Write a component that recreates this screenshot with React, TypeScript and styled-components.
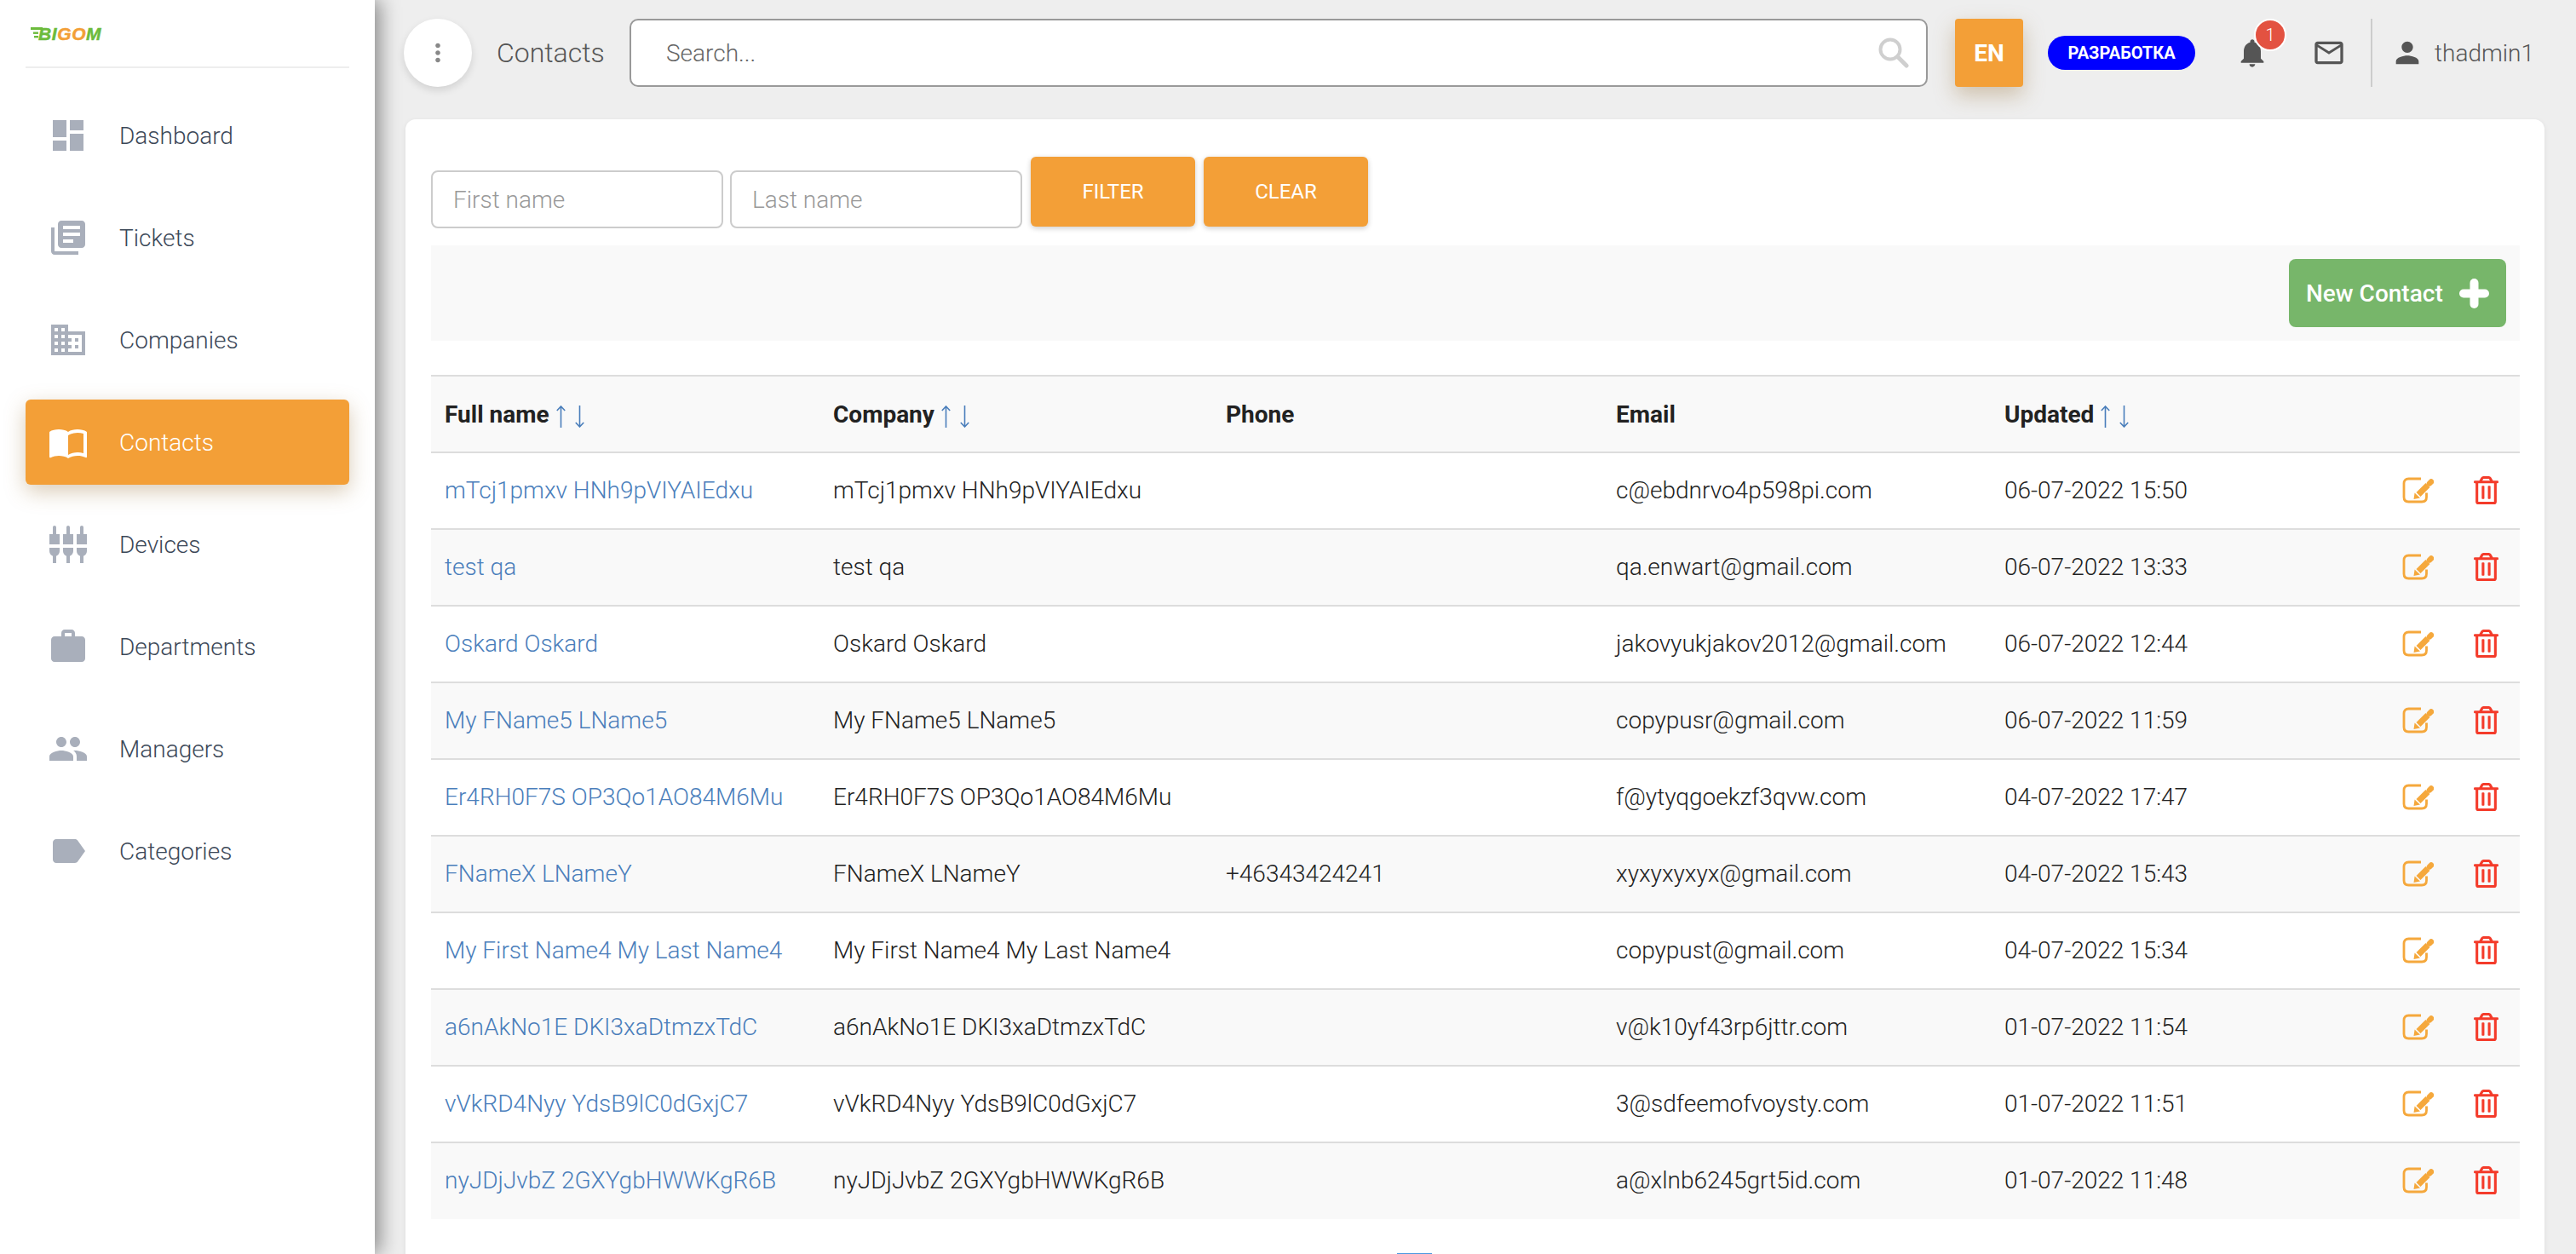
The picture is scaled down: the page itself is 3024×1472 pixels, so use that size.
import React from 'react';
import styled, { createGlobalStyle } from 'styled-components';
import {
  MdDashboard,
  MdLibraryBooks,
  MdDomain,
  MdImportContacts,
  MdSettingsInputComponent,
  MdWork,
  MdPeople,
  MdLabel,
  MdMoreVert,
  MdNotifications,
  MdMailOutline,
  MdPerson,
} from 'react-icons/md';
import { FaRegTrashAlt } from 'react-icons/fa';

const GlobalStyle = createGlobalStyle`
  html, body {
    margin: 0;
    padding: 0;
    height: 100%;
    overflow: hidden;
    background: #eeeeee;
    font-family: Roboto, 'Liberation Sans', sans-serif;
  }
  * { box-sizing: border-box; }
`;

const Layout = styled.div`
  display: flex;
  width: 3024px;
  height: 1472px;
  overflow: hidden;
`;

const Sidebar = styled.aside`
  flex: 0 0 440px;
  height: 100%;
  padding: 0 30px;
  background: #fff;
  box-shadow: 6px 0 22px rgba(0, 0, 0, 0.42);
  position: relative;
  z-index: 2;
`;

const LogoRow = styled.div`
  display: flex;
  align-items: center;
  height: 80px;
  padding: 0 6px;
  border-bottom: 2px solid #eeeeee;
`;

const LogoText = styled.span`
  margin-left: -5px;
  font-family: 'Liberation Sans', sans-serif;
  font-style: italic;
  font-weight: 700;
  font-size: 21px;
  line-height: 1;
  letter-spacing: 0.6px;
  color: #6cbb3c;
  -webkit-text-stroke: 0.5px currentColor;
  b {
    color: #f39f37;
    font-weight: 700;
  }
`;

const Nav = styled.nav`
  display: flex;
  flex-direction: column;
  gap: 20px;
  padding-top: 29px;
`;

const NavItem = styled.a<{ $active?: boolean }>`
  display: flex;
  align-items: center;
  height: 100px;
  padding-left: 26px;
  gap: 36px;
  border-radius: 6px;
  font-size: 28px;
  font-weight: 300;
  color: ${p => (p.$active ? '#fff' : '#3c4858')};
  background: ${p => (p.$active ? '#f39f37' : 'transparent')};
  box-shadow: ${p => (p.$active ? '0 8px 24px rgba(150, 110, 50, 0.35)' : 'none')};
  svg {
    width: 48px;
    height: 48px;
    flex: none;
    color: ${p => (p.$active ? '#fff' : '#a9afbb')};
  }
`;

const Main = styled.main`
  flex: 1;
  min-width: 0;
  padding: 22px 37px 0 36px;
`;

const Topbar = styled.header`
  display: flex;
  align-items: center;
  height: 80px;
  margin-left: -2px;
`;

const RoundButton = styled.button`
  flex: none;
  width: 80px;
  height: 80px;
  padding: 0;
  border: 0;
  border-radius: 50%;
  display: flex;
  align-items: center;
  justify-content: center;
  background: #fff;
  color: #888;
  box-shadow: 0 4px 10px rgba(0, 0, 0, 0.12);
  svg {
    width: 34px;
    height: 34px;
  }
`;

const PageTitle = styled.h1`
  flex: none;
  width: 156px;
  margin: 0 0 0 29px;
  font-size: 32px;
  font-weight: 300;
  color: #555;
`;

const SearchBox = styled.div`
  flex: none;
  display: flex;
  align-items: center;
  justify-content: space-between;
  width: 1524px;
  height: 80px;
  padding: 0 20px 0 41px;
  background: #fff;
  border: 2px solid #999;
  border-radius: 10px;
  font-size: 28px;
  font-weight: 300;
  color: #666;
`;

const LangButton = styled.button`
  flex: none;
  width: 80px;
  height: 80px;
  margin-left: 32px;
  border: 0;
  border-radius: 4px;
  background: #f39f37;
  color: #fff;
  font-family: Roboto, sans-serif;
  font-size: 28px;
  font-weight: 700;
  box-shadow: 0 10px 24px rgba(150, 110, 50, 0.35);
`;

const EnvPill = styled.span`
  flex: none;
  display: flex;
  align-items: center;
  justify-content: center;
  width: 173px;
  height: 40px;
  margin-left: 29px;
  border-radius: 20px;
  background: #0000ff;
  color: #fff;
  font-size: 20px;
  font-weight: 700;
`;

const IconSlot = styled.span`
  flex: none;
  position: relative;
  display: flex;
  align-items: center;
  justify-content: center;
  width: 40px;
  height: 40px;
  color: #555;
  svg {
    width: 40px;
    height: 40px;
  }
`;

const BellSlot = styled(IconSlot)`
  margin-left: 47px;
`;

const MailSlot = styled(IconSlot)`
  margin-left: 50px;
`;

const CountBadge = styled.span`
  position: absolute;
  top: -20px;
  left: 22px;
  width: 38px;
  height: 38px;
  display: flex;
  align-items: center;
  justify-content: center;
  border: 2px solid #fff;
  border-radius: 50%;
  background: #e35241;
  color: #fff;
  font-size: 20px;
  font-weight: 300;
`;

const UserBlock = styled.div`
  flex: none;
  display: flex;
  align-items: center;
  gap: 12px;
  height: 80px;
  margin-left: 29px;
  padding-left: 21px;
  border-left: 2px solid #ccc;
  font-size: 28px;
  font-weight: 300;
  color: #555;
`;

const Card = styled.section`
  margin-top: 38px;
  height: 1400px;
  padding: 44px 29px 0 30px;
  background: #fff;
  border-radius: 12px;
  box-shadow: 0 2px 6px rgba(0, 0, 0, 0.08);
`;

const FilterRow = styled.div`
  display: flex;
  align-items: flex-start;
  gap: 8px;
  height: 104px;
`;

const FilterInput = styled.div`
  flex: none;
  width: 343px;
  height: 68px;
  margin-top: 16px;
  padding-left: 24px;
  display: flex;
  align-items: center;
  border: 2px solid #ccc;
  border-radius: 8px;
  font-size: 28px;
  font-weight: 300;
  color: #999;
`;

const FilterButton = styled.button`
  flex: none;
  width: 193px;
  height: 82px;
  margin-left: 2px;
  border: 0;
  border-radius: 6px;
  background: #f39f37;
  color: #fff;
  font-family: Roboto, sans-serif;
  font-size: 24px;
  font-weight: 400;
  box-shadow: 0 2px 6px rgba(0, 0, 0, 0.2);
`;

const Toolbar = styled.div`
  display: flex;
  align-items: center;
  justify-content: flex-end;
  height: 112px;
  padding-right: 16px;
  background: #f9f9f9;
`;

const NewButton = styled.button`
  display: flex;
  align-items: center;
  justify-content: space-between;
  width: 255px;
  height: 80px;
  padding: 0 20px;
  border: 0;
  border-radius: 8px;
  background: #77b66a;
  color: #fff;
  font-family: Roboto, sans-serif;
  font-size: 28px;
  font-weight: 500;
`;

const Table = styled.table`
  width: 100%;
  margin-top: 40px;
  border-collapse: collapse;
  table-layout: fixed;
  font-size: 28px;
  font-weight: 300;
  color: #222;
`;

const HeadCell = styled.th<{ $w?: number }>`
  width: ${p => (p.$w ? `${p.$w}px` : 'auto')};
  height: 90px;
  padding: 0 0 0 16px;
  text-align: left;
  font-weight: 700;
  background: #f9f9f9;
  border-top: 2px solid #ddd;
  border-bottom: 2px solid #ddd;
`;

const SortGroup = styled.span`
  display: inline-flex;
  gap: 11px;
  margin-left: 8px;
  vertical-align: -6px;
  color: #4a7ebb;
`;

const Row = styled.tr`
  &:nth-child(even) {
    background: #f9f9f9;
  }
  &:not(:last-child) td {
    border-bottom: 2px solid #ddd;
  }
`;

const Cell = styled.td`
  height: 90px;
  padding: 0 0 2px 16px;
  white-space: nowrap;
`;

const NameLink = styled.a`
  color: #4a7ebb;
`;

const Actions = styled.div`
  display: flex;
  align-items: center;
  justify-content: flex-end;
  gap: 47px;
  padding-right: 25px;
`;

const TrashIcon = styled(FaRegTrashAlt)`
  width: 29px;
  height: 33px;
  color: #f43b2a;
`;

const PagerTop = styled.div`
  width: 41px;
  height: 40px;
  margin: 40px 0 0 1134px;
  background: #4a98e0;
`;

const navItems = [
  { label: 'Dashboard', icon: <MdDashboard /> },
  { label: 'Tickets', icon: <MdLibraryBooks /> },
  { label: 'Companies', icon: <MdDomain /> },
  { label: 'Contacts', icon: <MdImportContacts />, active: true },
  { label: 'Devices', icon: <MdSettingsInputComponent /> },
  { label: 'Departments', icon: <MdWork /> },
  { label: 'Managers', icon: <MdPeople /> },
  { label: 'Categories', icon: <MdLabel /> },
];

const contacts = [
  { name: 'mTcj1pmxv HNh9pVIYAIEdxu', phone: '', email: 'c@ebdnrvo4p598pi.com', updated: '06-07-2022 15:50' },
  { name: 'test qa', phone: '', email: 'qa.enwart@gmail.com', updated: '06-07-2022 13:33' },
  { name: 'Oskard Oskard', phone: '', email: 'jakovyukjakov2012@gmail.com', updated: '06-07-2022 12:44' },
  { name: 'My FName5 LName5', phone: '', email: 'copypusr@gmail.com', updated: '06-07-2022 11:59' },
  { name: 'Er4RH0F7S OP3Qo1AO84M6Mu', phone: '', email: 'f@ytyqgoekzf3qvw.com', updated: '04-07-2022 17:47' },
  { name: 'FNameX LNameY', phone: '+46343424241', email: 'xyxyxyxyx@gmail.com', updated: '04-07-2022 15:43' },
  { name: 'My First Name4 My Last Name4', phone: '', email: 'copypust@gmail.com', updated: '04-07-2022 15:34' },
  { name: 'a6nAkNo1E DKI3xaDtmzxTdC', phone: '', email: 'v@k10yf43rp6jttr.com', updated: '01-07-2022 11:54' },
  { name: 'vVkRD4Nyy YdsB9lC0dGxjC7', phone: '', email: '3@sdfeemofvoysty.com', updated: '01-07-2022 11:51' },
  { name: 'nyJDjJvbZ 2GXYgbHWWKgR6B', phone: '', email: 'a@xlnb6245grt5id.com', updated: '01-07-2022 11:48' },
];

function LogoMark() {
  return (
    <svg width="14" height="14" viewBox="0 0 14 14" fill="#6cbb3c">
      <rect x="0" y="0" width="14" height="3" />
      <rect x="3" y="5.5" width="6" height="2.4" />
      <rect x="4" y="10" width="5" height="2.4" />
    </svg>
  );
}

function SearchIcon() {
  return (
    <svg width="36" height="36" viewBox="0 0 36 36" fill="none" stroke="#cfcfcf">
      <circle cx="14" cy="14" r="11.5" strokeWidth="4" />
      <line x1="22.5" y1="22.5" x2="33" y2="33" strokeWidth="5" strokeLinecap="round" />
    </svg>
  );
}

function PlusIcon() {
  return (
    <svg width="35" height="35" viewBox="0 0 35 35" stroke="#fff" strokeWidth="10" strokeLinecap="round">
      <line x1="17.5" y1="5" x2="17.5" y2="30" />
      <line x1="5" y1="17.5" x2="30" y2="17.5" />
    </svg>
  );
}

function SortArrow({ down }: { down?: boolean }) {
  return (
    <svg width="11" height="26" viewBox="0 0 11 26" fill="none" stroke="currentColor" strokeWidth="1.6">
      {down ? (
        <path d="M5.5 0 V25 M0.8 20 L5.5 25 L10.2 20" />
      ) : (
        <path d="M5.5 26 V1 M0.8 6 L5.5 1 L10.2 6" />
      )}
    </svg>
  );
}

function EditIcon() {
  return (
    <svg width="37" height="31" viewBox="0 0 37 31" fill="none">
      <path
        d="M22 2 H7.5 Q2 2 2 7.5 V23.5 Q2 29 7.5 29 H23 Q28.5 29 28.5 23.5 V18.5"
        stroke="#f5a83c"
        strokeWidth="2.8"
      />
      <line x1="19" y1="20.5" x2="30" y2="9.5" stroke="#f5a83c" strokeWidth="7" />
      <line x1="32" y1="7.5" x2="34" y2="5.5" stroke="#f5a83c" strokeWidth="6.5" strokeLinecap="round" />
      <polygon points="13.5,26 14.6,18.6 21,24.6" fill="#f5a83c" />
    </svg>
  );
}

function SortArrows() {
  return (
    <SortGroup>
      <SortArrow />
      <SortArrow down />
    </SortGroup>
  );
}

export default function App() {
  return (
    <Layout>
      <GlobalStyle />
      <Sidebar>
        <LogoRow>
          <LogoMark />
          <LogoText>BI<b>GO</b>M</LogoText>
        </LogoRow>
        <Nav>
          {navItems.map(item => (
            <NavItem key={item.label} $active={item.active}>
              {item.icon}
              {item.label}
            </NavItem>
          ))}
        </Nav>
      </Sidebar>
      <Main>
        <Topbar>
          <RoundButton><MdMoreVert /></RoundButton>
          <PageTitle>Contacts</PageTitle>
          <SearchBox>
            Search...
            <SearchIcon />
          </SearchBox>
          <LangButton>EN</LangButton>
          <EnvPill>РАЗРАБОТКА</EnvPill>
          <BellSlot>
            <MdNotifications />
            <CountBadge>1</CountBadge>
          </BellSlot>
          <MailSlot><MdMailOutline /></MailSlot>
          <UserBlock>
            <IconSlot><MdPerson /></IconSlot>
            thadmin1
          </UserBlock>
        </Topbar>
        <Card>
          <FilterRow>
            <FilterInput>First name</FilterInput>
            <FilterInput>Last name</FilterInput>
            <FilterButton>FILTER</FilterButton>
            <FilterButton>CLEAR</FilterButton>
          </FilterRow>
          <Toolbar>
            <NewButton>New Contact <PlusIcon /></NewButton>
          </Toolbar>
          <Table>
            <thead>
              <tr>
                <HeadCell $w={456}>Full name<SortArrows /></HeadCell>
                <HeadCell $w={461}>Company<SortArrows /></HeadCell>
                <HeadCell $w={458}>Phone</HeadCell>
                <HeadCell $w={456}>Email</HeadCell>
                <HeadCell>Updated<SortArrows /></HeadCell>
                <HeadCell $w={240} />
              </tr>
            </thead>
            <tbody>
              {contacts.map(c => (
                <Row key={c.email}>
                  <Cell><NameLink>{c.name}</NameLink></Cell>
                  <Cell>{c.name}</Cell>
                  <Cell>{c.phone}</Cell>
                  <Cell>{c.email}</Cell>
                  <Cell>{c.updated}</Cell>
                  <Cell>
                    <Actions>
                      <EditIcon />
                      <TrashIcon />
                    </Actions>
                  </Cell>
                </Row>
              ))}
            </tbody>
          </Table>
          <PagerTop />
        </Card>
      </Main>
    </Layout>
  );
}
